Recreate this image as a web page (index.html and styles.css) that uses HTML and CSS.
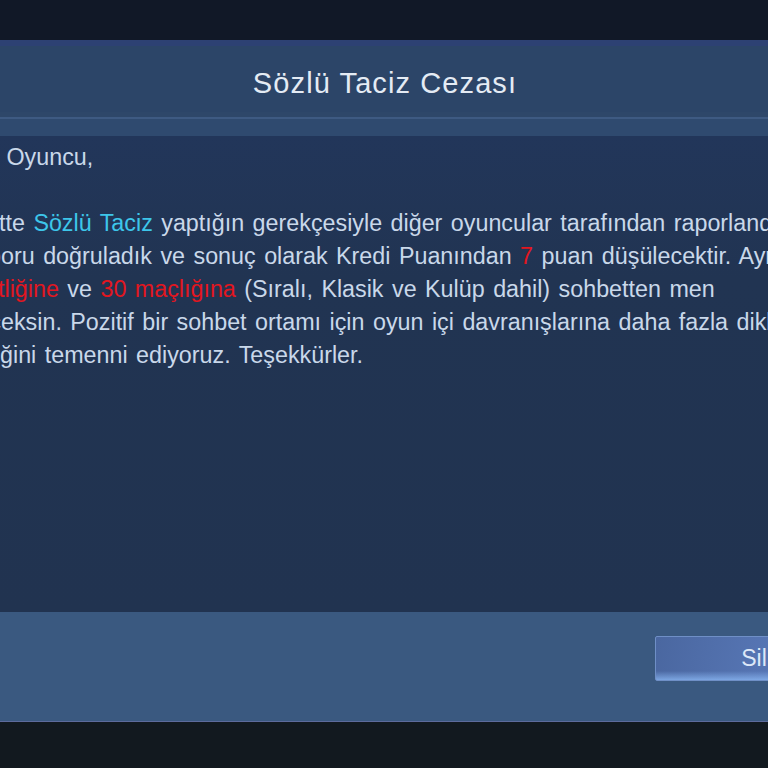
FILE: index.html
```html
<!DOCTYPE html>
<html lang="tr">
<head>
<meta charset="utf-8">
<title>Sözlü Taciz Cezası</title>
<link rel="stylesheet" href="styles.css">
</head>
<body>
<div class="screen">
  <div class="topbar"></div>
  <section class="dialog">
    <header class="dlg-head"><h1 class="dlg-title">Sözlü Taciz Cezası</h1></header>
    <div class="dlg-sub"></div>
    <div class="dlg-body">
      <div class="line l1"><span class="cut"><span>Sevgili</span></span> Oyuncu,</div>
      <div class="line blank"></div>
      <div class="line l3"><span class="cut"><span>Son 24 saa</span></span>tte <span class="hl-cyan">Sözlü Taciz</span> yaptığın gerekçesiyle diğer oyuncular tarafından raporlandın.</div>
      <div class="line l4"><span class="cut"><span>Rap</span></span>oru doğruladık ve sonuç olarak Kredi Puanından <span class="hl-red">7</span> puan düşülecektir. Ayrıca</div>
      <div class="line l5"><span class="cut"><span class="hl-red">24 saa</span></span><span class="hl-red">tliğine</span> ve <span class="hl-red">30 maçlığına</span> (Sıralı, Klasik ve Kulüp dahil) sohbetten men</div>
      <div class="line l6"><span class="cut"><span>edilec</span></span>eksin. Pozitif bir sohbet ortamı için oyun içi davranışlarına daha fazla dikkat</div>
      <div class="line l7"><span class="cut"><span>edece</span></span>ğini temenni ediyoruz. Teşekkürler.</div>
    </div>
    <footer class="dlg-foot"><button class="btn">Sil</button></footer>
  </section>
  <div class="bottombar"></div>
</div>
</body>
</html>
```

FILE: styles.css
```css
* { box-sizing: border-box; margin: 0; padding: 0; }
html, body { width: 768px; height: 768px; overflow: hidden; background: #121a26; }
body { font-family: "Liberation Sans", Arial, sans-serif; }

.screen { width: 768px; height: 768px; overflow: hidden; display: flex; flex-direction: column; }

.topbar { height: 40px; background: #111827; flex-shrink: 0; }

.dialog { display: flex; flex-direction: column; flex-shrink: 0; }

.dlg-head {
  height: 72px;
  border-top: 6px solid #2d4173;
  background: #2c4568;
  padding-top: 8px;
  text-align: center;
}
.dlg-title {
  font-weight: normal;
  font-size: 29px;
  line-height: 58px;
  letter-spacing: 1.1px;
  color: #e4ebf4;
  padding-left: 2px;
}

.dlg-sub {
  height: 24px;
  background: linear-gradient(#2e4769 0 5px, #3e5a82 5px 7px, #2f4a6f 7px 100%);
}

.dlg-body {
  height: 476px;
  background: linear-gradient(#22365a, #213452 30%, #213350);
  padding-top: 5px;
  overflow: hidden;
  color: #c9d8ea;
  font-size: 23.3px;
  word-spacing: 2px;
  line-height: 33px;
}
.line { white-space: nowrap; height: 33px; }
.cut {
  display: inline-flex;
  width: 0;
  justify-content: flex-end;
  white-space: pre;
  word-spacing: 0;
}
.l1 { margin-left: -2px; }
.l3 { margin-left: -1px; }
.l4 { margin-left: 1px; }
.l5 { margin-left: -2px; }
.l6 { margin-left: 1px; }
.l7 { margin-left: 0; }

.hl-cyan { color: #3dc6ea; }
.hl-red { color: #e3161f; }

.dlg-foot {
  height: 110px;
  background: #3a5980;
  border-bottom: 1px solid #5d6b9c;
  display: flex;
  align-items: flex-start;
  padding-top: 24px;
  padding-left: 655px;
}
.btn {
  flex-shrink: 0;
  width: 198px;
  height: 45px;
  border: 1px solid #6f8fc6;
  border-radius: 2px;
  background:
    linear-gradient(to top, rgba(140,185,245,0.75) 0, rgba(140,185,245,0) 9px),
    linear-gradient(100deg, #4a67a0, #5574b2 50%, #5b7bbd);
  color: #dce8f8;
  font-family: "Liberation Sans", Arial, sans-serif;
  font-size: 23px;
  text-align: center;
}

.bottombar { flex: 1; background: #12191f; }
```
